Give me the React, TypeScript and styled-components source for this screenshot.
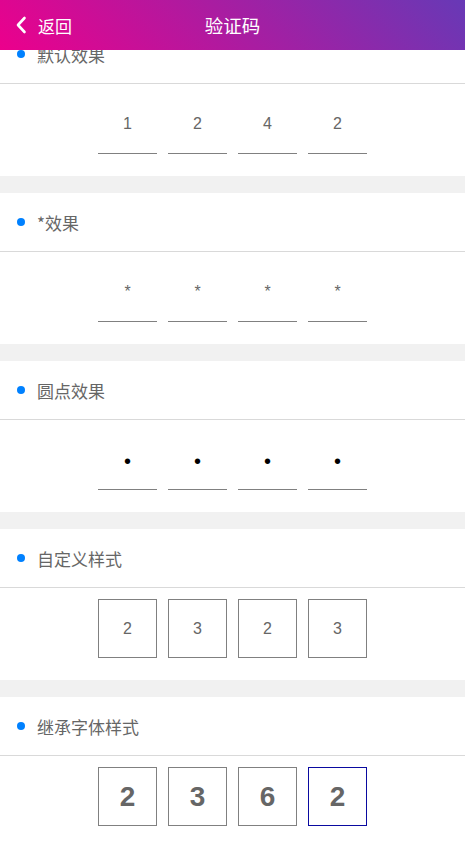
import React from "react";
import styled, { createGlobalStyle } from "styled-components";

const Global = createGlobalStyle`
  html, body { margin: 0; padding: 0; background: #f1f1f1; }
  body { font-family: "Liberation Sans", "Noto Sans CJK SC", sans-serif; }
  * { box-sizing: border-box; }
`;

const Header = styled.header`
  position: fixed;
  top: 0;
  left: 0;
  right: 0;
  height: 50px;
  z-index: 10;
  display: flex;
  align-items: center;
  justify-content: center;
  background-image: linear-gradient(45deg, #ec008c, #6739b6);
  color: #fff;
  font-family: "Noto Sans CJK SC", sans-serif;
`;

const Back = styled.div`
  position: absolute;
  left: 15px;
  top: 0;
  height: 50px;
  display: flex;
  align-items: center;
  gap: 11px;
  font-size: 17px;
`;

const Title = styled.div`
  font-size: 18.5px;
`;

const Page = styled.main`
  padding-top: 25px;
  display: flex;
  flex-direction: column;
  gap: 17px;
`;

const Section = styled.section`
  background: #fff;
`;

const SectionTitle = styled.div`
  height: 59px;
  display: flex;
  align-items: center;
  padding-left: 17px;
  gap: 12px;
  border-bottom: 1px solid #d9d9d9;
  font-family: "Noto Sans CJK SC", sans-serif;
  font-size: 17px;
  color: #666;
`;

const Dot = styled.span`
  width: 8px;
  height: 8px;
  border-radius: 50%;
  background: #0081ff;
  margin-top: -1px;
`;

const Codes = styled.div`
  height: 92px;
  display: flex;
  justify-content: center;
  align-items: flex-start;
  padding-top: 11px;
  gap: 11px;
`;

type CellProps = { $variant: "line" | "box"; $active?: boolean; $bold?: boolean; $dot?: boolean };

const Cell = styled.div<CellProps>`
  width: 59px;
  height: 59px;
  display: flex;
  align-items: center;
  justify-content: center;
  color: ${(p) => (p.$dot ? "#000" : "#666")};
  font-family: "Liberation Sans", Arial, sans-serif;
  font-size: ${(p) => (p.$bold ? "28px" : p.$dot ? "20px" : "16px")};
  font-weight: ${(p) => (p.$bold ? 700 : 400)};
  padding-top: ${(p) => (p.$dot ? "2px" : "0")};
  ${(p) =>
    p.$variant === "line"
      ? `border-bottom: 1px solid #808080;`
      : `border: 1px solid ${p.$active ? "#0a0aa0" : "#808080"};`}
`;

const sections: {
  title: string;
  values: string[];
  variant: "line" | "box";
  bold?: boolean;
  dot?: boolean;
  active?: number;
}[] = [
  { title: "默认效果", values: ["1", "2", "4", "2"], variant: "line" },
  { title: "*效果", values: ["*", "*", "*", "*"], variant: "line" },
  { title: "圆点效果", values: ["•", "•", "•", "•"], variant: "line", dot: true },
  { title: "自定义样式", values: ["2", "3", "2", "3"], variant: "box" },
  { title: "继承字体样式", values: ["2", "3", "6", "2"], variant: "box", bold: true, active: 3 },
];

export default function App() {
  return (
    <>
      <Global />
      <Header>
        <Back>
          <svg width="12" height="18" viewBox="0 0 12 18">
            <path d="M9.5 2 L3 9 L9.5 16" fill="none" stroke="#fff" strokeWidth="2.6" strokeLinecap="round" strokeLinejoin="round" />
          </svg>
          <span>返回</span>
        </Back>
        <Title>验证码</Title>
      </Header>
      <Page>
        {sections.map((s) => (
          <Section key={s.title}>
            <SectionTitle>
              <Dot />
              <span>{s.title}</span>
            </SectionTitle>
            <Codes>
              {s.values.map((v, i) => (
                <Cell key={i} $variant={s.variant} $bold={s.bold} $dot={s.dot} $active={s.active === i}>
                  {v}
                </Cell>
              ))}
            </Codes>
          </Section>
        ))}
      </Page>
    </>
  );
}
